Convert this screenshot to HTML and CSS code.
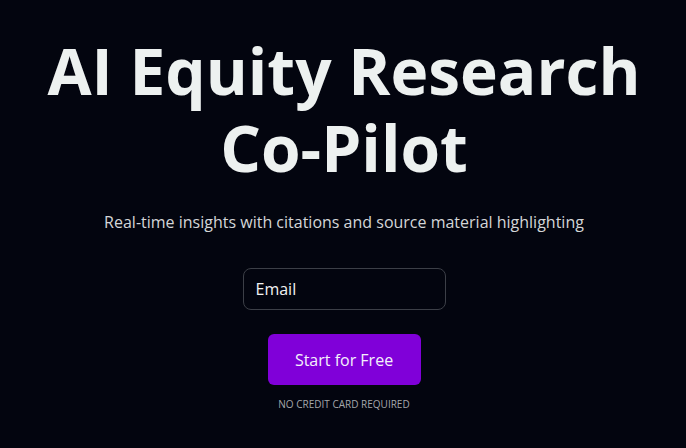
FILE: index.html
```html
<!DOCTYPE html>
<html lang="en">
<head>
<meta charset="utf-8">
<title>AI Equity Research Co-Pilot</title>
<link rel="stylesheet" href="styles.css">
</head>
<body>
<main class="hero">
  <h1 class="title">AI Equity Research<br>Co-Pilot</h1>
  <p class="subtitle">Real-time insights with citations and source material highlighting</p>
  <form class="signup">
    <input class="email" type="email" placeholder="Email">
    <button class="cta" type="button">Start for Free</button>
    <p class="note">NO CREDIT CARD REQUIRED</p>
  </form>
</main>
</body>
</html>
```
FILE: styles.css
```css
html, body {
  margin: 0;
  padding: 0;
  background: #03050f;
  height: 100%;
}
body {
  font-family: "Open Sans", "Liberation Sans", sans-serif;
  color: #eef1f0;
}
.hero {
  display: flex;
  flex-direction: column;
  align-items: center;
  padding: 32px 0 0 2px;
  text-align: center;
}
.title {
  margin: 0;
  font-size: 64px;
  line-height: 77px;
  font-weight: 700;
  color: #edf1f0;
  letter-spacing: 0;
}
.subtitle {
  margin: 24px 0 0;
  font-size: 16px;
  line-height: 24px;
  color: #d4d6d8;
}
.signup {
  display: flex;
  flex-direction: column;
  align-items: center;
  margin-top: 34px;
}
.email {
  box-sizing: border-box;
  width: 203px;
  height: 42px;
  padding: 0 12px;
  background: #03050f;
  border: 1px solid #3c3f47;
  border-radius: 8px;
  font-family: inherit;
  font-size: 16px;
  color: #fff;
  outline: none;
}
.email::placeholder {
  color: #f2f2f2;
  opacity: 1;
}
.cta {
  margin-top: 24px;
  width: 153px;
  height: 51px;
  border: 0;
  border-radius: 6px;
  background: #8000d9;
  color: #f4f0fb;
  font-family: inherit;
  font-size: 16px;
  cursor: pointer;
}
.note {
  margin: 12px 0 0;
  font-size: 10px;
  line-height: 14px;
  color: #a5a7ab;
}
```
